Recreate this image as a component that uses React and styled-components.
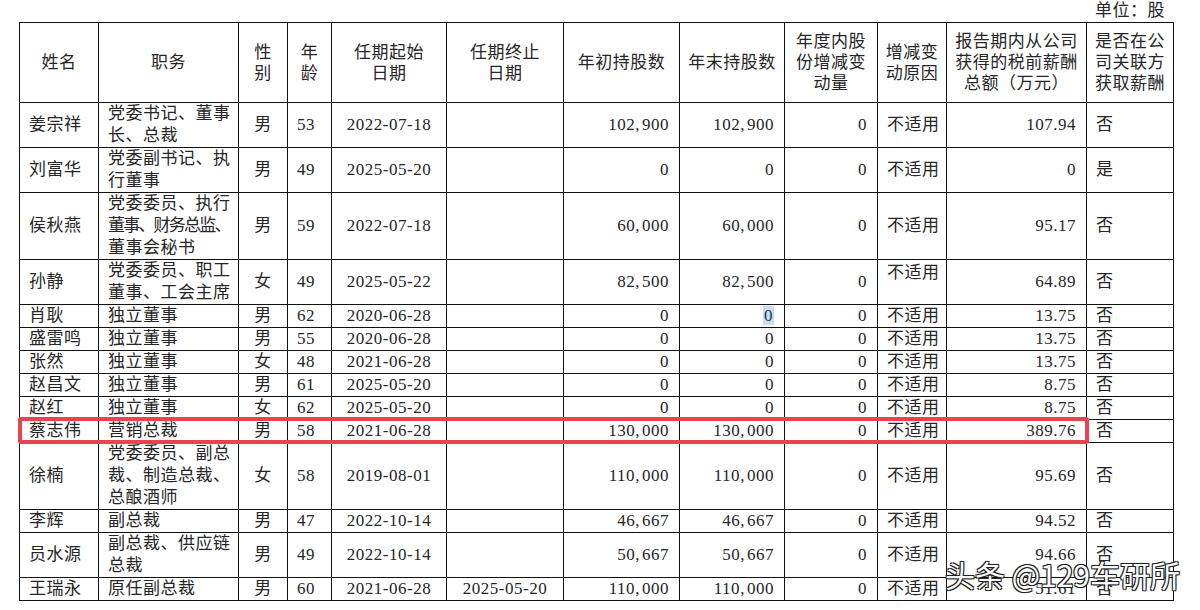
import React from 'react';
import styled, { createGlobalStyle } from 'styled-components';

const GlobalStyle = createGlobalStyle`
  html, body {
    margin: 0;
    padding: 0;
    background: #fff;
  }
  body {
    font-family: "Liberation Serif", "Noto Sans CJK SC", serif;
    color: #262626;
  }
`;

const Page = styled.div`
  position: relative;
  width: 1200px;
  height: 610px;
  overflow: hidden;
  padding-left: 19px;
  box-sizing: border-box;
`;

const Caption = styled.div`
  width: 1154px;
  height: 22px;
  line-height: 22px;
  font-size: 17px;
  letter-spacing: 0.5px;
  text-align: right;
  padding-right: 8px;
  box-sizing: border-box;
`;

const Sheet = styled.table`
  width: 1154px;
  table-layout: fixed;
  border-collapse: collapse;
  font-size: 17px;
  letter-spacing: 0.5px;
`;

const HeadRow = styled.tr`
  height: 80px;
`;

const HeadCell = styled.th`
  border: 1px solid #111;
  font-weight: normal;
  line-height: 21px;
  text-align: center;
  vertical-align: middle;
  padding: 0 2px;
  white-space: nowrap;
`;

const Cell = styled.td`
  position: relative;
  border: 1px solid #111;
  padding: ${(p) => (p.$valign === 'top' ? '2px' : '0')} ${(p) => (p.$align === 'right' ? '10px' : '9px')} 0 9px;
  line-height: 22px;
  text-align: ${(p) => p.$align || 'left'};
  vertical-align: ${(p) => p.$valign || 'middle'};
  white-space: nowrap;
`;

const RoleLine = styled.span`
  display: block;
  text-align: justify;
  text-align-last: ${(p) => (p.$last ? 'left' : 'justify')};
  letter-spacing: ${(p) => (p.$tight ? '-1.8px' : '0.5px')};
`;

const Wide = styled.span`
  letter-spacing: 0.6px;
`;

const Selected = styled.span`
  background: #c9dcf0;
  color: #1d3a5c;
  padding: 0 1px;
`;

// red box drawn over the 蔡志伟 row
const Highlight = styled.div`
  position: absolute;
  left: -2px;
  top: -3px;
  bottom: -2px;
  width: 1071px;
  border: 4px solid #e9434f;
  border-radius: 3px;
  box-sizing: border-box;
  pointer-events: none;
`;

const Watermark = styled.div`
  position: absolute;
  right: 20px;
  top: 555px;
  font-family: "Noto Sans CJK SC", "Noto Sans", sans-serif;
  font-size: 30px;
  line-height: 38px;
  color: #fff;
  white-space: nowrap;
  text-shadow: -1px -1px 0 #222, 1px -1px 0 #222, -1px 1px 0 #222, 1px 1px 0 #222,
    0 0 2px #222;
`;

const columns = [
  { w: 79, align: 'left' },
  { w: 140, align: 'left' },
  { w: 49, align: 'center' },
  { w: 44, align: 'left' },
  { w: 115, align: 'center' },
  { w: 117, align: 'center' },
  { w: 116, align: 'right' },
  { w: 105, align: 'right' },
  { w: 93, align: 'right' },
  { w: 69, align: 'left' },
  { w: 140, align: 'right' },
  { w: 87, align: 'left' },
];

const headers = [
  ['姓名'],
  ['职务'],
  ['性', '别'],
  ['年', '龄'],
  ['任期起始', '日期'],
  ['任期终止', '日期'],
  ['年初持股数'],
  ['年末持股数'],
  ['年度内股', '份增减变', '动量'],
  ['增减变', '动原因'],
  ['报告期内从公司', '获得的税前薪酬', '总额（万元）'],
  ['是否在公', '司关联方', '获取薪酬'],
];

const rows = [
  { name: '姜宗祥', role: ['党委书记、董事', '长、总裁'], sex: '男', age: '53', start: '2022-07-18', end: '', begin: '102,900', close: '102,900', change: '0', pay: '107.94', related: '否' },
  { name: '刘富华', role: ['党委副书记、执', '行董事'], sex: '男', age: '49', start: '2025-05-20', end: '', begin: '0', close: '0', change: '0', pay: '0', related: '是' },
  { name: '侯秋燕', role: ['党委委员、执行', '董事、财务总监、', '董事会秘书'], tight: 1, sex: '男', age: '59', start: '2022-07-18', end: '', begin: '60,000', close: '60,000', change: '0', pay: '95.17', related: '否' },
  { name: '孙静', role: ['党委委员、职工', '董事、工会主席'], sex: '女', age: '49', start: '2025-05-22', end: '', begin: '82,500', close: '82,500', change: '0', pay: '64.89', related: '否', reasonTop: true },
  { name: '肖耿', role: ['独立董事'], sex: '男', age: '62', start: '2020-06-28', end: '', begin: '0', close: '0', change: '0', pay: '13.75', related: '否', selected: true },
  { name: '盛雷鸣', role: ['独立董事'], sex: '男', age: '55', start: '2020-06-28', end: '', begin: '0', close: '0', change: '0', pay: '13.75', related: '否' },
  { name: '张然', role: ['独立董事'], sex: '女', age: '48', start: '2021-06-28', end: '', begin: '0', close: '0', change: '0', pay: '13.75', related: '否' },
  { name: '赵昌文', role: ['独立董事'], sex: '男', age: '61', start: '2025-05-20', end: '', begin: '0', close: '0', change: '0', pay: '8.75', related: '否' },
  { name: '赵红', role: ['独立董事'], sex: '女', age: '62', start: '2025-05-20', end: '', begin: '0', close: '0', change: '0', pay: '8.75', related: '否' },
  { name: '蔡志伟', role: ['营销总裁'], sex: '男', age: '58', start: '2021-06-28', end: '', begin: '130,000', close: '130,000', change: '0', pay: '389.76', related: '否', marked: true },
  { name: '徐楠', role: ['党委委员、副总', '裁、制造总裁、', '总酿酒师'], sex: '女', age: '58', start: '2019-08-01', end: '', begin: '110,000', close: '110,000', change: '0', pay: '95.69', related: '否' },
  { name: '李辉', role: ['副总裁'], sex: '男', age: '47', start: '2022-10-14', end: '', begin: '46,667', close: '46,667', change: '0', pay: '94.52', related: '否' },
  { name: '员水源', role: ['副总裁、供应链', '总裁'], sex: '男', age: '49', start: '2022-10-14', end: '', begin: '50,667', close: '50,667', change: '0', pay: '94.66', related: '否' },
  { name: '王瑞永', role: ['原任副总裁'], sex: '男', age: '60', start: '2021-06-28', end: '2025-05-20', begin: '110,000', close: '110,000', change: '0', pay: '51.61', related: '否' },
];

// the source prints its commas half-width, so give them a little room
const Amount = ({ value }) => {
  const parts = value.split(',');
  return parts.map((p, i) => (
    <React.Fragment key={i}>
      {i > 0 && <Wide>,&#8202;</Wide>}
      {p}
    </React.Fragment>
  ));
};

const App = () => {
  return (
    <Page>
      <GlobalStyle />
      <Caption>单位：股</Caption>
      <Sheet>
        <colgroup>
          {columns.map((c, i) => (
            <col key={i} style={{ width: c.w }} />
          ))}
        </colgroup>
        <thead>
          <HeadRow>
            {headers.map((lines, i) => (
              <HeadCell key={i}>
                {lines.map((l, j) => (
                  <React.Fragment key={j}>
                    {j > 0 && <br />}
                    {l}
                  </React.Fragment>
                ))}
              </HeadCell>
            ))}
          </HeadRow>
        </thead>
        <tbody>
          {rows.map((r) => (
            <tr key={r.name}>
              <Cell $align="left">
                {r.name}
                {r.marked && <Highlight />}
              </Cell>
              <Cell $align="left">
                {r.role.map((l, j) => (
                  <RoleLine
                    key={j}
                    $last={j === r.role.length - 1}
                    $tight={r.tight === j}
                  >
                    {l}
                  </RoleLine>
                ))}
              </Cell>
              <Cell $align="center">{r.sex}</Cell>
              <Cell $align="left">{r.age}</Cell>
              <Cell $align="center">{r.start}</Cell>
              <Cell $align="center">{r.end}</Cell>
              <Cell $align="right">
                <Amount value={r.begin} />
              </Cell>
              <Cell $align="right">
                {r.selected ? <Selected>{r.close}</Selected> : <Amount value={r.close} />}
              </Cell>
              <Cell $align="right">{r.change}</Cell>
              <Cell $align="left" $valign={r.reasonTop ? 'top' : 'middle'}>
                不适用
              </Cell>
              <Cell $align="right">{r.pay}</Cell>
              <Cell $align="left">{r.related}</Cell>
            </tr>
          ))}
        </tbody>
      </Sheet>
      <Watermark>头条 @129车研所</Watermark>
    </Page>
  );
};

export default App;
